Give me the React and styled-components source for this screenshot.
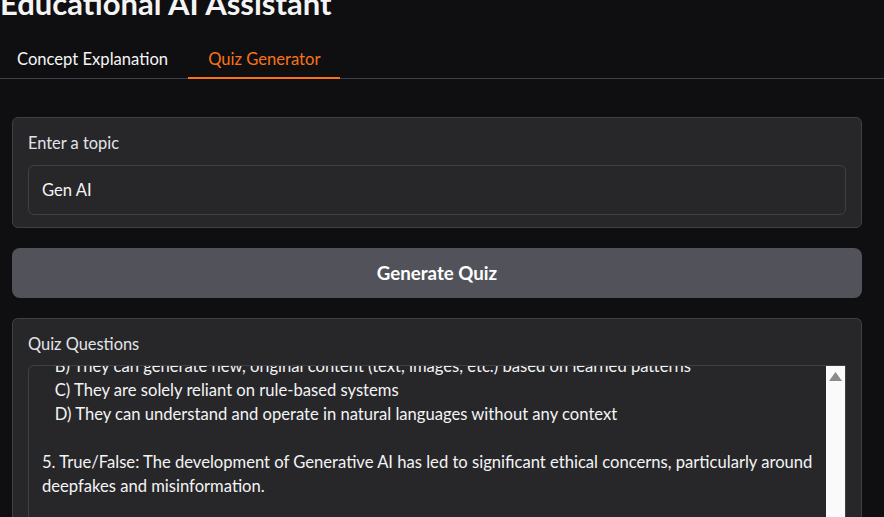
import React from "react";
import styled, { createGlobalStyle } from "styled-components";

const Global = createGlobalStyle`
  html, body { margin: 0; padding: 0; background: #0f0f11; overflow: hidden; }
  body { font-family: "Lato", "Noto Sans", sans-serif; color: #f4f4f5; }
  * { box-sizing: border-box; }
`;

const Page = styled.div`
  width: 884px;
  height: 517px;
  overflow: hidden;
  background: #0f0f11;
`;

const Header = styled.div`
  margin-left: -3px;
`;

const Title = styled.h1`
  margin: -17px 0 0 3px;
  font-size: 31px;
  line-height: 40px;
  font-weight: 700;
  color: #f4f4f5;
`;

const TabBar = styled.div`
  display: flex;
  margin-top: 17px;
  border-bottom: 1px solid #3f3f46;
`;

const Tab = styled.button`
  background: none;
  border: none;
  font-family: inherit;
  font-size: 16.6px;
  line-height: 20px;
  padding: 9px 20px 8px;
  margin-bottom: -1px;
  color: ${(p) => (p.$active ? "#f97316" : "#f4f4f5")};
  border-bottom: 2px solid ${(p) => (p.$active ? "#f97316" : "transparent")};
  cursor: pointer;
`;

const Content = styled.div`
  display: flex;
  flex-direction: column;
  gap: 20px;
  padding: 38px 22px 0 12px;
`;

const Block = styled.div`
  background: #27272a;
  border: 1px solid #3f3f46;
  border-radius: 6px;
  padding: 15px 15px 12px;
  display: flex;
  flex-direction: column;
  gap: 12px;
`;

const Label = styled.div`
  font-size: 16.4px;
  line-height: 20px;
  color: #e4e4e7;
`;

const Input = styled.div`
  height: 50px;
  border: 1px solid #3f3f46;
  border-radius: 6px;
  background: #27272a;
  padding: 0 13px;
  display: flex;
  align-items: center;
  font-size: 16.6px;
  color: #f4f4f5;
`;

const Button = styled.button`
  height: 50px;
  border: none;
  border-radius: 8px;
  background: #52525b;
  color: #ffffff;
  font-family: inherit;
  font-size: 18.7px;
  font-weight: 700;
  cursor: pointer;
`;

const OutBlock = styled(Block)`
  height: 220px;
  padding-bottom: 0;
  border-bottom: none;
  border-radius: 6px 6px 0 0;
  gap: 11px;
`;

const TextArea = styled.div`
  flex: 1;
  display: flex;
  border: 1px solid #3f3f46;
  border-bottom: none;
  border-radius: 6px 0 0 0;
  overflow: hidden;
`;

const TextScroll = styled.div`
  flex: 1;
  overflow: hidden;
  padding: 0 13px;
`;

const TextInner = styled.div`
  margin-top: -12px;
  white-space: pre-wrap;
  font-size: 16.6px;
  line-height: 24px;
  color: #f4f4f5;
`;

const Scrollbar = styled.div`
  width: 19px;
  background: #fafafa;
  display: flex;
  justify-content: center;
  padding-top: 6px;
`;

const quizText = `   B) They can generate new, original content (text, images, etc.) based on learned patterns
   C) They are solely reliant on rule-based systems
   D) They can understand and operate in natural languages without any context

5. True/False: The development of Generative AI has led to significant ethical concerns, particularly around deepfakes and misinformation.
`;

export default function App() {
  return (
    <Page>
      <Global />
      <Header>
        <Title>Educational AI Assistant</Title>
        <TabBar>
          <Tab>Concept Explanation</Tab>
          <Tab $active>Quiz Generator</Tab>
        </TabBar>
      </Header>
      <Content>
        <Block>
          <Label>Enter a topic</Label>
          <Input>Gen AI</Input>
        </Block>
        <Button>Generate Quiz</Button>
        <OutBlock>
          <Label>Quiz Questions</Label>
          <TextArea>
            <TextScroll>
              <TextInner>{quizText}</TextInner>
            </TextScroll>
            <Scrollbar>
              <svg width="13" height="9" viewBox="0 0 13 9">
                <path d="M6.5 0 L13 9 L0 9 Z" fill="#8a8a8a" />
              </svg>
            </Scrollbar>
          </TextArea>
        </OutBlock>
      </Content>
    </Page>
  );
}
